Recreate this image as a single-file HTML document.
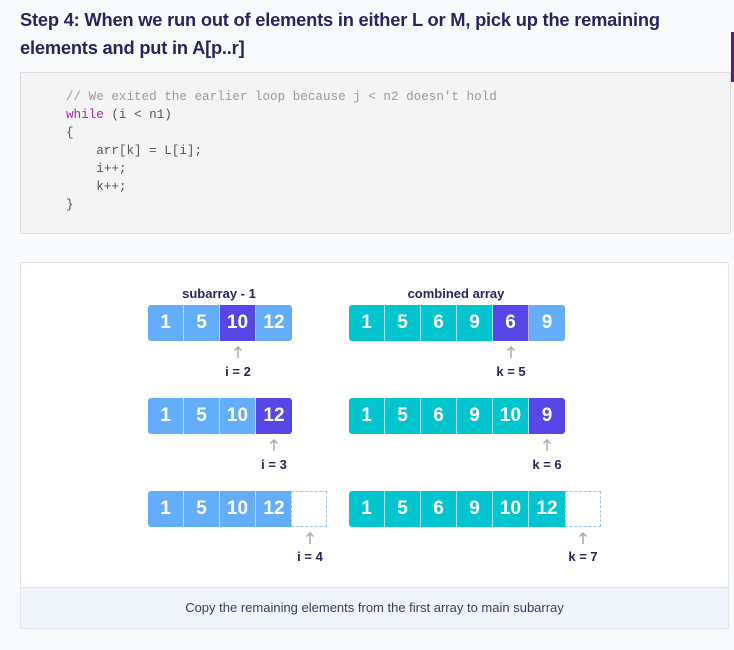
<!DOCTYPE html>
<html><head><meta charset="utf-8">
<style>
*{margin:0;padding:0;box-sizing:border-box}
body{width:734px;height:650px;background:#f9fafc;position:relative;overflow:hidden;font-family:"Liberation Sans",sans-serif}
h1{position:absolute;left:20px;top:6px;width:700px;font-size:18.3px;line-height:28px;color:#25265e;font-weight:bold;letter-spacing:-0.2px}
.bar{position:absolute;left:731px;top:32px;width:3px;height:50px;background:#5a1c8c}
.code{position:absolute;left:20px;top:72px;width:711px;height:162px;background:#f4f4f5;border:1px solid #dcdde2;border-radius:2px}
pre{position:absolute;left:45px;top:15px;font-family:"Liberation Mono",monospace;font-size:12.6px;line-height:18px;color:#555}
.c{color:#999}.k{color:#a626a4}
.fig{position:absolute;left:20px;top:262px;width:709px;height:367px;background:#fff;border:1px solid #e0e3ea;border-radius:2px}
.cap{position:absolute;left:0;right:0;bottom:0;height:41px;background:#f0f4fb;border-top:1px solid #dfe3ec;text-align:center;font-size:13px;line-height:40px;color:#3b3d5a}
.cell{position:absolute;height:36px;width:36px;color:#fff;font-weight:bold;font-size:19px;line-height:36px;text-align:center;border-right:1px solid rgba(255,255,255,.6)}
.b{background:#63adf9}.p{background:#5946e6}.t{background:#03c5cf}
.d{border:1px dashed #9cc3f0;background:#fff}
.lbl{position:absolute;font-size:13px;font-weight:bold;color:#25265e;text-align:center;width:120px}
.arr{position:absolute;width:10px;height:14px}
</style></head><body>
<h1>Step 4: When we run out of elements in either L or M, pick up the remaining elements and put in A[p..r]</h1>
<div class="bar"></div>
<div class="code"><pre><span class="c">// We exited the earlier loop because j &lt; n2 doesn't hold</span>
<span class="k">while</span> (i &lt; n1)
{
    arr[k] = L[i];
    i++;
    k++;
}</pre></div>
<div class="fig"><div class="cap">Copy the remaining elements from the first array to main subarray</div></div>

<div class="lbl" style="left:159px;top:286px">subarray - 1</div>
<div class="lbl" style="left:396px;top:286px">combined array</div>

<div class="cell b" style="left:148px;top:305px;border-radius:3px 0 0 3px">1</div>
<div class="cell b" style="left:184px;top:305px">5</div>
<div class="cell p" style="left:220px;top:305px">10</div>
<div class="cell b" style="left:256px;top:305px;border-radius:0 3px 3px 0;border-right:0">12</div>
<div class="cell t" style="left:349px;top:305px;border-radius:3px 0 0 3px">1</div>
<div class="cell t" style="left:385px;top:305px">5</div>
<div class="cell t" style="left:421px;top:305px">6</div>
<div class="cell t" style="left:457px;top:305px">9</div>
<div class="cell p" style="left:493px;top:305px">6</div>
<div class="cell b" style="left:529px;top:305px;border-radius:0 3px 3px 0;border-right:0">9</div>
<svg class="arr" style="left:233px;top:345px" viewBox="0 0 10 14"><path d="M5 13V2M1.5 5.5L5 2l3.5 3.5" stroke="#aaa" stroke-width="1.5" fill="none"/></svg>
<svg class="arr" style="left:506px;top:345px" viewBox="0 0 10 14"><path d="M5 13V2M1.5 5.5L5 2l3.5 3.5" stroke="#aaa" stroke-width="1.5" fill="none"/></svg>
<div class="lbl" style="left:178px;top:364px">i = 2</div>
<div class="lbl" style="left:451px;top:364px">k = 5</div>

<div class="cell b" style="left:148px;top:398px;border-radius:3px 0 0 3px">1</div>
<div class="cell b" style="left:184px;top:398px">5</div>
<div class="cell b" style="left:220px;top:398px">10</div>
<div class="cell p" style="left:256px;top:398px;border-radius:0 3px 3px 0;border-right:0">12</div>
<div class="cell t" style="left:349px;top:398px;border-radius:3px 0 0 3px">1</div>
<div class="cell t" style="left:385px;top:398px">5</div>
<div class="cell t" style="left:421px;top:398px">6</div>
<div class="cell t" style="left:457px;top:398px">9</div>
<div class="cell t" style="left:493px;top:398px">10</div>
<div class="cell p" style="left:529px;top:398px;border-radius:0 3px 3px 0;border-right:0">9</div>
<svg class="arr" style="left:269px;top:438px" viewBox="0 0 10 14"><path d="M5 13V2M1.5 5.5L5 2l3.5 3.5" stroke="#aaa" stroke-width="1.5" fill="none"/></svg>
<svg class="arr" style="left:542px;top:438px" viewBox="0 0 10 14"><path d="M5 13V2M1.5 5.5L5 2l3.5 3.5" stroke="#aaa" stroke-width="1.5" fill="none"/></svg>
<div class="lbl" style="left:214px;top:457px">i = 3</div>
<div class="lbl" style="left:487px;top:457px">k = 6</div>

<div class="cell b" style="left:148px;top:491px;border-radius:3px 0 0 3px">1</div>
<div class="cell b" style="left:184px;top:491px">5</div>
<div class="cell b" style="left:220px;top:491px">10</div>
<div class="cell b" style="left:256px;top:491px;border-right:0">12</div>
<div class="cell d" style="left:291px;top:491px"></div>
<div class="cell t" style="left:349px;top:491px;border-radius:3px 0 0 3px">1</div>
<div class="cell t" style="left:385px;top:491px">5</div>
<div class="cell t" style="left:421px;top:491px">6</div>
<div class="cell t" style="left:457px;top:491px">9</div>
<div class="cell t" style="left:493px;top:491px">10</div>
<div class="cell t" style="left:529px;top:491px;border-right:0">12</div>
<div class="cell d" style="left:565px;top:491px"></div>
<svg class="arr" style="left:305px;top:531px" viewBox="0 0 10 14"><path d="M5 13V2M1.5 5.5L5 2l3.5 3.5" stroke="#aaa" stroke-width="1.5" fill="none"/></svg>
<svg class="arr" style="left:578px;top:531px" viewBox="0 0 10 14"><path d="M5 13V2M1.5 5.5L5 2l3.5 3.5" stroke="#aaa" stroke-width="1.5" fill="none"/></svg>
<div class="lbl" style="left:250px;top:549px">i = 4</div>
<div class="lbl" style="left:523px;top:549px">k = 7</div>
</body></html>
